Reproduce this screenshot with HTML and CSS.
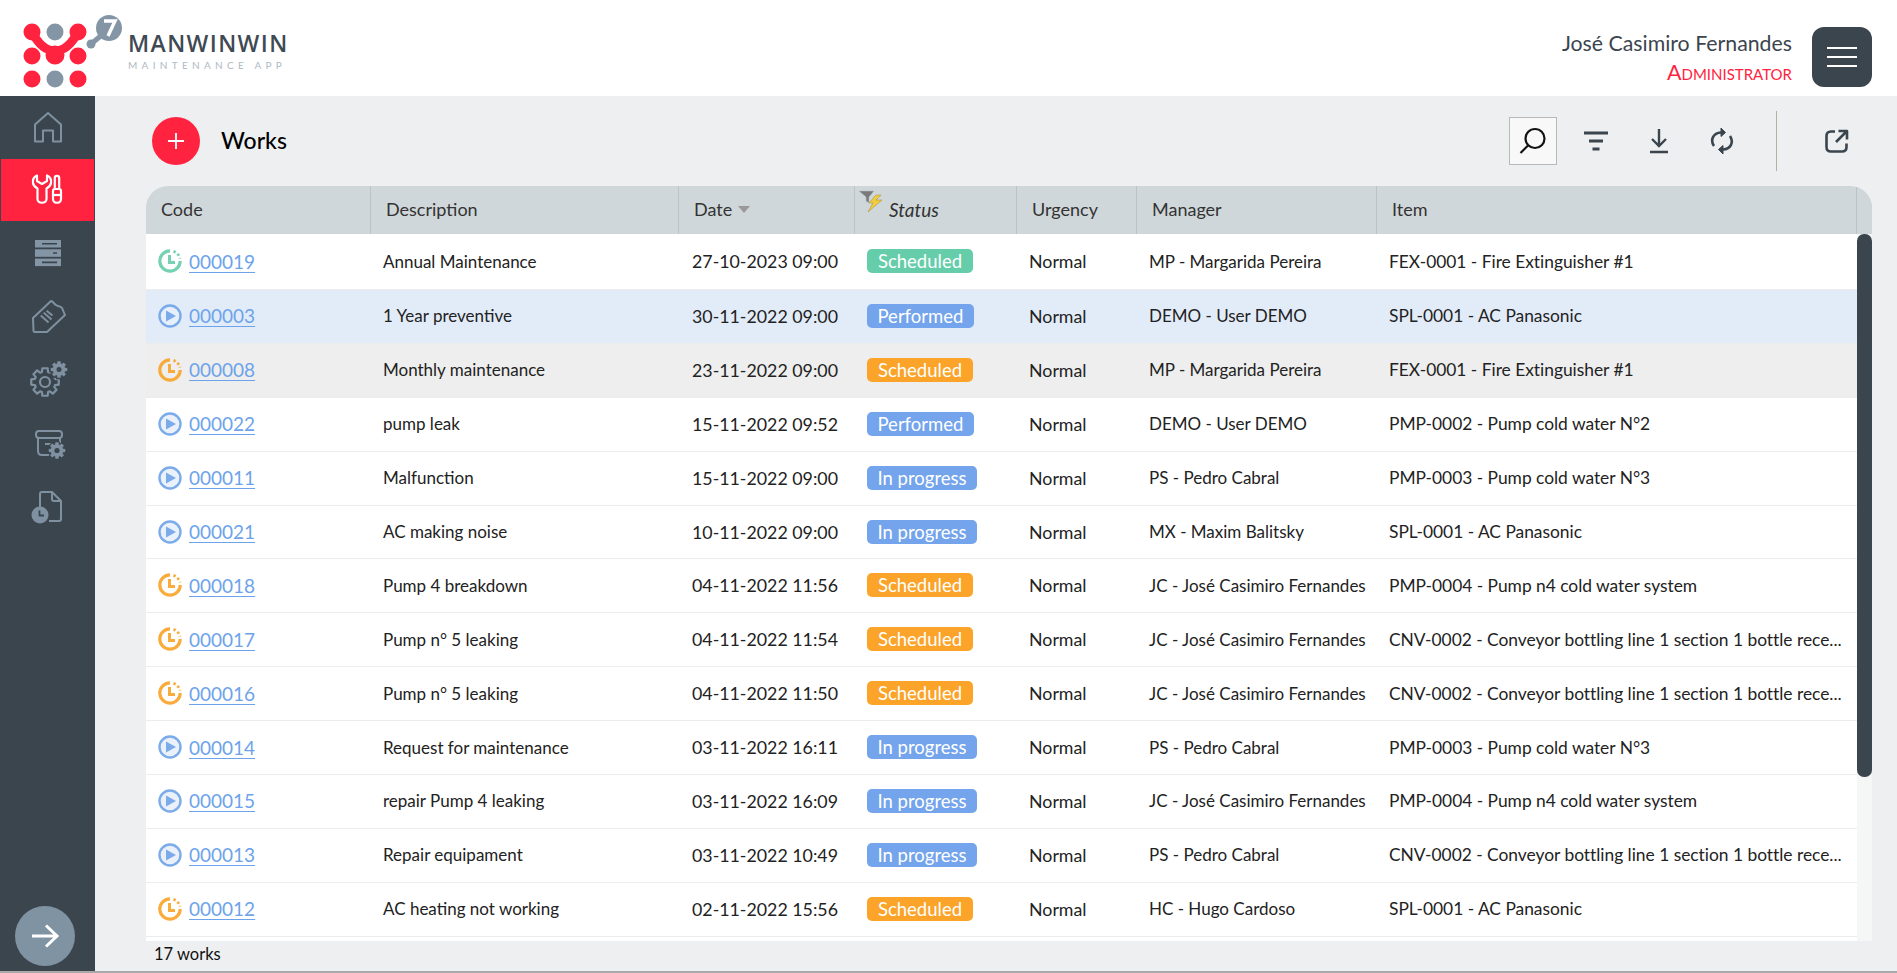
FILE: index.html
```html
<!DOCTYPE html>
<html>
<head>
  <meta charset="utf-8">
  <title>Works</title>
  <link rel="stylesheet" href="styles.css">
</head>
<body>
  <svg class="defs" width="0" height="0">
    <defs>
      <path id="gear" d="M10.04-3.07L13.74-2.67L13.74 2.67L10.04 3.07L9.27 4.93L11.61 7.83L7.83 11.61L4.93 9.27L3.07 10.04L2.67 13.74L-2.67 13.74L-3.07 10.04L-4.93 9.27L-7.83 11.61L-11.61 7.83L-9.27 4.93L-10.04 3.07L-13.74 2.67L-13.74-2.67L-10.04-3.07L-9.27-4.93L-11.61-7.83L-7.83-11.61L-4.93-9.27L-3.07-10.04L-2.67-13.74L2.67-13.74L3.07-10.04L4.93-9.27L7.83-11.61L11.61-7.83L9.27-4.93Z"/>
      <symbol id="ico-clock" viewBox="0 0 24 24">
        <path d="M12 1.800A10.200 10.200 0 1 0 22.200 12" fill="none" stroke="currentColor" stroke-width="3.200"/>
        <path d="M15.500 2.400A10.200 10.200 0 0 1 22 9.500" fill="none" stroke="currentColor" stroke-width="2.800" stroke-dasharray="2.400 2.200"/>
        <path d="M11.500 6V13.500H17" fill="none" stroke="currentColor" stroke-width="3"/>
      </symbol>
      <symbol id="ico-play" viewBox="0 0 24 24">
        <circle cx="12" cy="12" r="10.500" fill="#e8f0fb" stroke="currentColor" stroke-width="2.400"/>
        <path d="M8 6.500L18 12L8 17.500Z" fill="currentColor"/>
      </symbol>
    </defs>
  </svg>

  <header class="topbar">
    <div class="logo">
      <svg class="logo-mark" width="124" height="90" viewBox="0 0 124 90">
        <g fill="#ff2340">
          <circle cx="32" cy="29" r="8.500"/>
          <circle cx="78" cy="29" r="8.500"/>
          <circle cx="32" cy="53" r="8.500"/>
          <circle cx="78" cy="53" r="8.500"/>
          <circle cx="32" cy="76" r="8.500"/>
          <circle cx="78" cy="76" r="8.500"/>
          <circle cx="55" cy="52" r="9.500"/>
        </g>
        <path d="M32 29Q42 48 55 48Q68 48 78 29" fill="none" stroke="#ff2340" stroke-width="9"/>
        <g fill="#8496a5">
          <circle cx="55" cy="29" r="8.500"/>
          <circle cx="55" cy="76" r="8.500"/>
          <circle cx="109" cy="25" r="13"/>
          <circle cx="91" cy="41" r="4.500"/>
        </g>
        <path d="M91 41L103 31" stroke="#8496a5" stroke-width="5"/>
        <path d="M104 18H115L108 33" fill="none" stroke="#fff" stroke-width="3.400"/>
      </svg>
      <div class="logo-text">
        <div class="logo-name">MANWINWIN</div>
        <div class="logo-sub">MAINTENANCE APP</div>
      </div>
    </div>
    <div class="user">
      <div class="user-name">José Casimiro Fernandes</div>
      <div class="user-role">Administrator</div>
    </div>
    <button class="burger"><span></span><span></span><span></span></button>
  </header>

  <div class="app">
    <nav class="sidebar">
      <a class="nav-item nav-home">
        <svg width="40" height="40" viewBox="0 0 40 40" fill="none" stroke="#7f91a0" stroke-width="2" stroke-linejoin="round">
          <path d="M7 16.500L20 5L33 16.500V33.500H25V22.500H15V33.500H7Z"/>
        </svg>
      </a>
      <a class="nav-item active">
        <svg width="40" height="40" viewBox="0 0 40 40" fill="none" stroke="#fff" stroke-width="2.200" stroke-linejoin="round">
          <path d="M9 5.500C5.500 7 4.500 10 5 13C5.500 16 7.500 17.500 9.500 18.500V29C9.500 34 18.500 34 18.500 29V18.500C20.500 17.500 22.500 16 23 13C23.500 10 22.500 7 19 5.500V11L14 14L9 11Z"/>
          <path d="M26.800 19V8A2.200 2.200 0 0 1 31.200 8V19"/>
          <path d="M25 21Q25 19 27 19H31Q33 19 33 21V29C33 34 25 34 25 29Z"/>
          <path d="M25 25H33"/>
        </svg>
      </a>
      <a class="nav-item">
        <svg width="40" height="40" viewBox="0 0 40 40">
          <g fill="#8496a5">
            <rect x="7" y="7" width="26" height="7.500"/>
            <rect x="7" y="16.300" width="26" height="7.500"/>
            <rect x="7" y="25.600" width="26" height="7.500"/>
          </g>
          <g stroke="#3b454e" stroke-width="1.600">
            <path d="M14 10.700H29M25 20H29M14 29.400H29"/>
          </g>
        </svg>
      </a>
      <a class="nav-item">
        <svg width="40" height="40" viewBox="0 0 40 40" fill="none" stroke="#7f91a0" stroke-width="2" stroke-linejoin="round">
          <path d="M5 22L23 5C25 5 26 8 28 9C30 10.500 33 10 34 12C35 14 36 17 37 19L19 36H7Q5.500 36 5.500 34.500Z"/>
          <path d="M14 22L22 29M17 19L25 26M20 17L26 22" transform="translate(-1 -2) scale(.98)"/>
        </svg>
      </a>
      <a class="nav-item">
        <svg width="40" height="40" viewBox="0 0 40 40">
          <use href="#gear" transform="translate(17 22)" fill="none" stroke="#7f91a0" stroke-width="2.200" stroke-linejoin="round"/>
          <circle cx="17" cy="22" r="5" fill="none" stroke="#7f91a0" stroke-width="2.200"/>
          <use href="#gear" transform="translate(31 9.500) scale(.6)" fill="#7f91a0" stroke="#3b454e" stroke-width="5" paint-order="stroke"/>
          <circle cx="31" cy="9.500" r="2.500" fill="#3b454e"/>
        </svg>
      </a>
      <a class="nav-item">
        <svg width="40" height="40" viewBox="0 0 40 40" fill="none" stroke="#7f91a0" stroke-width="2" stroke-linejoin="round">
          <rect x="8" y="8" width="26" height="7" rx="3"/>
          <path d="M10 15V28Q10 32 14 32H22M32 15V21M17 21H24"/>
          <use href="#gear" transform="translate(29 27.500) scale(.6)" fill="#7f91a0" stroke="#3b454e" stroke-width="4" paint-order="stroke"/>
          <circle cx="29" cy="27.500" r="2.600" fill="#3b454e" stroke="none"/>
        </svg>
      </a>
      <a class="nav-item">
        <svg width="40" height="40" viewBox="0 0 40 40" fill="none" stroke="#7f91a0" stroke-width="2" stroke-linejoin="round">
          <path d="M12 21V7Q12 5 14 5H24L33 14V32Q33 34 31 34H21"/>
          <path d="M24 5V12Q24 14 26 14H33"/>
          <circle cx="12" cy="28" r="8.500" fill="#7f91a0" stroke="none"/>
          <path d="M11.500 23.500V28.500H16" stroke="#3b454e" stroke-width="1.800"/>
        </svg>
      </a>
      <button class="nav-toggle">
        <svg width="30" height="26" viewBox="0 0 30 26" fill="none" stroke="#fff" stroke-width="3">
          <path d="M2 13H27M16 2.500L27 13L16 23.500"/>
        </svg>
      </button>
    </nav>

    <main class="content">
      <div class="toolbar">
        <button class="add-btn">
          <svg width="18" height="18" viewBox="0 0 18 18" stroke="#fff" stroke-width="1.800"><path d="M9 1V17M1 9H17"/></svg>
        </button>
        <h1 class="page-title">Works</h1>
        <div class="tools">
          <button class="tool tool-on">
            <svg width="30" height="30" viewBox="0 0 30 30" fill="none" stroke="#111" stroke-width="2.200"><circle cx="17" cy="12.500" r="9.500"/><path d="M10 19.500L2.500 27"/></svg>
          </button>
          <button class="tool">
            <svg width="26" height="22" viewBox="0 0 26 22" fill="none" stroke="#3b454e" stroke-width="3"><path d="M1 3H25M6 11H20M9.500 19H16.500"/></svg>
          </button>
          <button class="tool">
            <svg width="20" height="26" viewBox="0 0 20 26" fill="none" stroke="#3b454e" stroke-width="2.400"><path d="M10 1V17M3 11L10 18L17 11M1 24H19"/></svg>
          </button>
          <button class="tool">
            <svg width="24" height="28" viewBox="0 0 24 28" fill="none" stroke="#3b454e" stroke-width="2.600"><path d="M4 19C0 13 3 6 11 5.500"/><path d="M20 9C24 15 21 22 13 22.500"/><path d="M11 1L15.500 5.500L11 9.500Z" fill="#3b454e" stroke-width="1"/><path d="M13 18.500L8.500 22.500L13 27Z" fill="#3b454e" stroke-width="1"/></svg>
          </button>
          <span class="tool-sep"></span>
          <button class="tool tool-last">
            <svg width="24" height="24" viewBox="0 0 24 24" fill="none" stroke="#3b454e" stroke-width="2.600" stroke-linejoin="round"><path d="M10 2.500H6Q1.500 2.500 1.500 7V18Q1.500 22.500 6 22.500H17Q21.500 22.500 21.500 18V14.500"/><path d="M11 13L21.500 2.500M13.500 2H22V10.500"/></svg>
          </button>
        </div>
      </div>

      <section class="grid">
        <div class="row head">
          <div class="th">Code</div>
          <div class="th">Description</div>
          <div class="th">Date <i class="sort"></i></div>
          <div class="th th-status">
            <svg class="filter-ico" width="26" height="24" viewBox="0 0 26 24">
              <path d="M1 2H16L11 8V14L8 12V8Z" fill="#77797a" stroke="#b9bdbf" stroke-width=".6"/>
              <path d="M18 6L11 14H15L10 23L24 11H18L23 6Z" fill="#f0cc3e" stroke="#a58a2a" stroke-width=".5"/>
            </svg>
            <em>Status</em>
          </div>
          <div class="th">Urgency</div>
          <div class="th">Manager</div>
          <div class="th">Item</div>
          <div class="th-end"></div>
        </div>
        <div class="grid-body">
          <div class="rows">
            <div class="row first">
              <div class="td code green"><svg width="24" height="24"><use href="#ico-clock"/></svg><a href="#">000019</a></div>
              <div class="td">Annual Maintenance</div>
              <div class="td">27-10-2023 09:00</div>
              <div class="td"><span class="badge b-green">Scheduled</span></div>
              <div class="td">Normal</div>
              <div class="td">MP - Margarida Pereira</div>
              <div class="td">FEX-0001 - Fire Extinguisher #1</div>
            </div>
            <div class="row selected">
              <div class="td code blue"><svg width="24" height="24"><use href="#ico-play"/></svg><a href="#">000003</a></div>
              <div class="td">1 Year preventive</div>
              <div class="td">30-11-2022 09:00</div>
              <div class="td"><span class="badge b-blue">Performed</span></div>
              <div class="td">Normal</div>
              <div class="td">DEMO - User DEMO</div>
              <div class="td">SPL-0001 - AC Panasonic</div>
            </div>
            <div class="row hovered">
              <div class="td code orange"><svg width="24" height="24"><use href="#ico-clock"/></svg><a href="#">000008</a></div>
              <div class="td">Monthly maintenance</div>
              <div class="td">23-11-2022 09:00</div>
              <div class="td"><span class="badge b-orange">Scheduled</span></div>
              <div class="td">Normal</div>
              <div class="td">MP - Margarida Pereira</div>
              <div class="td">FEX-0001 - Fire Extinguisher #1</div>
            </div>
            <div class="row">
              <div class="td code blue"><svg width="24" height="24"><use href="#ico-play"/></svg><a href="#">000022</a></div>
              <div class="td">pump leak</div>
              <div class="td">15-11-2022 09:52</div>
              <div class="td"><span class="badge b-blue">Performed</span></div>
              <div class="td">Normal</div>
              <div class="td">DEMO - User DEMO</div>
              <div class="td">PMP-0002 - Pump cold water N°2</div>
            </div>
            <div class="row">
              <div class="td code blue"><svg width="24" height="24"><use href="#ico-play"/></svg><a href="#">000011</a></div>
              <div class="td">Malfunction</div>
              <div class="td">15-11-2022 09:00</div>
              <div class="td"><span class="badge b-blue">In progress</span></div>
              <div class="td">Normal</div>
              <div class="td">PS - Pedro Cabral</div>
              <div class="td">PMP-0003 - Pump cold water N°3</div>
            </div>
            <div class="row">
              <div class="td code blue"><svg width="24" height="24"><use href="#ico-play"/></svg><a href="#">000021</a></div>
              <div class="td">AC making noise</div>
              <div class="td">10-11-2022 09:00</div>
              <div class="td"><span class="badge b-blue">In progress</span></div>
              <div class="td">Normal</div>
              <div class="td">MX - Maxim Balitsky</div>
              <div class="td">SPL-0001 - AC Panasonic</div>
            </div>
            <div class="row">
              <div class="td code orange"><svg width="24" height="24"><use href="#ico-clock"/></svg><a href="#">000018</a></div>
              <div class="td">Pump 4 breakdown</div>
              <div class="td">04-11-2022 11:56</div>
              <div class="td"><span class="badge b-orange">Scheduled</span></div>
              <div class="td">Normal</div>
              <div class="td">JC - José Casimiro Fernandes</div>
              <div class="td">PMP-0004 - Pump n4 cold water system</div>
            </div>
            <div class="row">
              <div class="td code orange"><svg width="24" height="24"><use href="#ico-clock"/></svg><a href="#">000017</a></div>
              <div class="td">Pump n° 5 leaking</div>
              <div class="td">04-11-2022 11:54</div>
              <div class="td"><span class="badge b-orange">Scheduled</span></div>
              <div class="td">Normal</div>
              <div class="td">JC - José Casimiro Fernandes</div>
              <div class="td">CNV-0002 - Conveyor bottling line 1 section 1 bottle rece...</div>
            </div>
            <div class="row">
              <div class="td code orange"><svg width="24" height="24"><use href="#ico-clock"/></svg><a href="#">000016</a></div>
              <div class="td">Pump n° 5 leaking</div>
              <div class="td">04-11-2022 11:50</div>
              <div class="td"><span class="badge b-orange">Scheduled</span></div>
              <div class="td">Normal</div>
              <div class="td">JC - José Casimiro Fernandes</div>
              <div class="td">CNV-0002 - Conveyor bottling line 1 section 1 bottle rece...</div>
            </div>
            <div class="row">
              <div class="td code blue"><svg width="24" height="24"><use href="#ico-play"/></svg><a href="#">000014</a></div>
              <div class="td">Request for maintenance</div>
              <div class="td">03-11-2022 16:11</div>
              <div class="td"><span class="badge b-blue">In progress</span></div>
              <div class="td">Normal</div>
              <div class="td">PS - Pedro Cabral</div>
              <div class="td">PMP-0003 - Pump cold water N°3</div>
            </div>
            <div class="row">
              <div class="td code blue"><svg width="24" height="24"><use href="#ico-play"/></svg><a href="#">000015</a></div>
              <div class="td">repair Pump 4 leaking</div>
              <div class="td">03-11-2022 16:09</div>
              <div class="td"><span class="badge b-blue">In progress</span></div>
              <div class="td">Normal</div>
              <div class="td">JC - José Casimiro Fernandes</div>
              <div class="td">PMP-0004 - Pump n4 cold water system</div>
            </div>
            <div class="row">
              <div class="td code blue"><svg width="24" height="24"><use href="#ico-play"/></svg><a href="#">000013</a></div>
              <div class="td">Repair equipament</div>
              <div class="td">03-11-2022 10:49</div>
              <div class="td"><span class="badge b-blue">In progress</span></div>
              <div class="td">Normal</div>
              <div class="td">PS - Pedro Cabral</div>
              <div class="td">CNV-0002 - Conveyor bottling line 1 section 1 bottle rece...</div>
            </div>
            <div class="row">
              <div class="td code orange"><svg width="24" height="24"><use href="#ico-clock"/></svg><a href="#">000012</a></div>
              <div class="td">AC heating not working</div>
              <div class="td">02-11-2022 15:56</div>
              <div class="td"><span class="badge b-orange">Scheduled</span></div>
              <div class="td">Normal</div>
              <div class="td">HC - Hugo Cardoso</div>
              <div class="td">SPL-0001 - AC Panasonic</div>
            </div>
          </div>
          <div class="scrollbar"><div class="thumb"></div></div>
        </div>
      </section>
      <div class="count">17 works</div>
    </main>
  </div>
  <div class="page-line"></div>
</body>
</html>
```

FILE: styles.css
```css
* {
  box-sizing: border-box;
}
html, body {
  height: 100%;
}
body {
  margin: 0;
  display: flex;
  flex-direction: column;
  overflow: hidden;
  font-family: "Lato", "Noto Sans", sans-serif;
  font-size: 16px;
  color: #222;
  background-color: #eeeff1;
}
button {
  padding: 0;
  border: none;
  background: none;
  font: inherit;
}
.defs {
  position: absolute;
}

/* top bar */
.topbar {
  display: flex;
  align-items: center;
  height: 96px;
  padding-right: 25px;
  background-color: #fff;
}
.logo {
  display: flex;
  align-items: flex-start;
  flex: 1;
}
.logo-mark {
  display: block;
  margin-right: 4px;
}
.logo-text {
  padding-top: 26px;
}
.logo-name {
  font-family: "Open Sans", sans-serif;
  font-size: 23px;
  font-weight: 600;
  line-height: 28px;
  letter-spacing: 1.4px;
  color: #3f4a54;
}
.logo-sub {
  font-size: 10px;
  line-height: 14px;
  letter-spacing: 4.300px;
  color: #aeb9c3;
  margin-top: 1px;
}
.user {
  margin-right: 20px;
  padding-top: 20px;
  text-align: right;
}
.user-name {
  font-size: 21.300px;
  line-height: 29px;
  color: #3b454e;
}
.user-role {
  font-size: 21.500px;
  line-height: 29px;
  font-variant: small-caps;
  color: #ff2340;
}
.burger {
  display: flex;
  flex-direction: column;
  justify-content: center;
  align-items: center;
  gap: 7px;
  width: 60px;
  height: 60px;
  margin-top: 18px;
  border-radius: 12px;
  background-color: #3b454e;
}
.burger span {
  width: 30px;
  height: 2px;
  background-color: #fff;
}

/* layout */
.app {
  display: flex;
  flex: 1;
  min-height: 0;
}
.page-line {
  height: 2px;
  background-color: #a9a9a9;
}

/* sidebar */
.sidebar {
  display: flex;
  flex-direction: column;
  width: 95px;
  background-color: #3b454e;
}
.nav-item {
  display: flex;
  align-items: center;
  justify-content: center;
  height: 63.500px;
}
.nav-item.nav-home {
  height: 63px;
}
.nav-item.active {
  height: 62px;
  margin-left: 1px;
  margin-right: 1px;
  background-color: #ff2340;
}
.nav-toggle {
  display: flex;
  align-items: center;
  justify-content: center;
  width: 60px;
  height: 60px;
  margin: auto 0 5px 15px;
  border-radius: 50%;
  background-color: #8093a3;
}

/* toolbar */
.content {
  display: flex;
  flex-direction: column;
  flex: 1;
  min-width: 0;
}
.toolbar {
  display: flex;
  align-items: center;
  height: 90px;
  padding-left: 57px;
  padding-right: 36px;
}
.add-btn {
  display: flex;
  align-items: center;
  justify-content: center;
  width: 48px;
  height: 48px;
  border-radius: 50%;
  background-color: #ff2340;
}
.page-title {
  margin: 0 0 2px 21px;
  font-size: 23px;
  font-weight: 500;
  color: #000;
}
.tools {
  display: flex;
  align-items: center;
  gap: 15px;
  margin-left: auto;
}
.tool {
  display: flex;
  align-items: center;
  justify-content: center;
  width: 48px;
  height: 48px;
  border: 1px solid transparent;
}
.tool-on {
  border-color: #b8b8b8;
  background-color: #f8f8f8;
}
.tool-sep {
  width: 1px;
  height: 60px;
  margin-left: 15px;
  background-color: #b5b0a4;
}
.tool-last {
  margin-left: 21px;
}

/* table */
.grid {
  display: flex;
  flex-direction: column;
  height: 755px;
  margin-left: 51px;
  margin-right: 25px;
  overflow: hidden;
  border-radius: 22px 22px 0 0;
}
.row {
  display: grid;
  grid-template-columns: 224px 309px 175px 162px 120px 240px 481px;
  height: 53.900px;
  border-bottom: 1px solid #ececec;
  background-color: #fff;
}
.row.first {
  height: 56px;
}
.row.selected {
  background-color: #e2ecf9;
}
.row.hovered {
  background-color: #eeeeee;
}
.row.head {
  grid-template-columns: 225px 308px 176px 162px 120px 240px 480px 15px;
  height: 48px;
  border-bottom: none;
  background-color: #d0d7da;
}
.th {
  display: flex;
  align-items: center;
  gap: 6px;
  padding-left: 15px;
  padding-bottom: 2px;
  border-right: 1px solid #bcc3c6;
  font-size: 18px;
  color: #333;
}
.th-end {
  background-color: #d0d7da;
}
.th-status {
  position: relative;
  padding-left: 34px;
}
.th-status em {
  font-size: 19px;
}
.filter-ico {
  position: absolute;
  left: 3px;
  top: 3px;
}
.sort {
  width: 0;
  height: 0;
  border-left: 6px solid transparent;
  border-right: 6px solid transparent;
  border-top: 7px solid #999;
}
.grid-body {
  display: flex;
  flex: 1;
  min-height: 0;
}
.rows {
  flex: 1;
  min-width: 0;
  background-color: #fff;
}
.td {
  display: flex;
  align-items: center;
  min-width: 0;
  padding-left: 13px;
  padding-bottom: 1px;
  font-size: 17px;
  color: #222;
  white-space: nowrap;
}
.td:nth-child(3), .td:nth-child(5) {
  font-size: 17.800px;
}
.td:nth-child(7) {
  font-size: 17.400px;
  letter-spacing: -.02px;
}
.code {
  gap: 7px;
  padding-left: 12px;
}
.code svg {
  opacity: .9;
}
.code a {
  color: #6da3ea;
  font-size: 19px;
  text-underline-offset: 3px;
}
.green {
  color: #66cdaa;
}
.blue {
  color: #6ea3e8;
}
.orange {
  color: #f9a428;
}
.badge {
  padding: 0 10.500px;
  height: 24px;
  line-height: 24px;
  min-width: 106px;
  border-radius: 5px;
  text-align: center;
  font-size: 18.500px;
  color: #fff;
}
.b-green {
  background-color: #66cdaa;
}
.b-blue {
  background-color: #74a4eb;
}
.b-orange {
  background-color: #fba429;
}
.scrollbar {
  width: 15px;
  background-color: #f5f7f7;
}
.thumb {
  height: 543px;
  border-radius: 7px;
  background-color: #3b454e;
}
.count {
  padding-left: 59px;
  line-height: 27px;
  font-size: 16.500px;
  color: #111;
}
```
